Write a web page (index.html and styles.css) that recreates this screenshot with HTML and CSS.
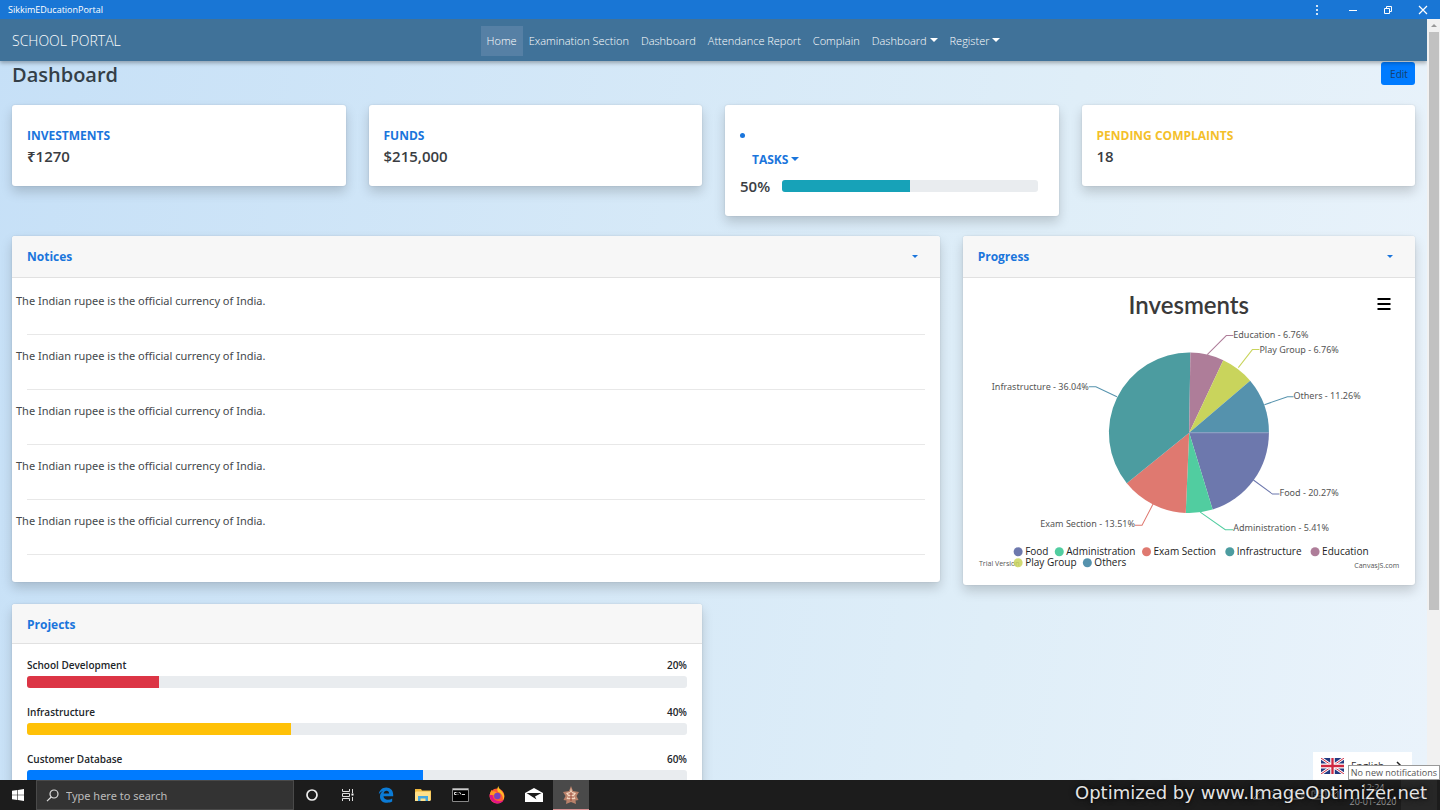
FILE: index.html
```html
<!DOCTYPE html>
<html lang="en">
<head>
<meta charset="utf-8">
<title>SikkimEDucationPortal</title>
<link rel="stylesheet" href="styles.css">
</head>
<body>
<header class="titlebar">
  <span class="titlebar-name">SikkimEDucationPortal</span>
  <div class="window-controls">
    <button aria-label="Menu"><svg width="12" height="12" viewBox="0 0 12 12" fill="#fff"><circle cx="5" cy="2" r="1.100"/><circle cx="5" cy="6" r="1.100"/><circle cx="5" cy="10" r="1.100"/></svg></button>
    <button aria-label="Minimize"><svg width="12" height="12" viewBox="0 0 12 12" stroke="#fff"><path d="M2 6.500h8"/></svg></button>
    <button aria-label="Restore"><svg width="12" height="12" viewBox="0 0 12 12" fill="none" stroke="#fff"><path d="M2.500 4.500h5v5h-5zM4.500 4.500v-2h5v5h-2"/></svg></button>
    <button aria-label="Close"><svg width="12" height="12" viewBox="0 0 12 12" stroke="#fff" stroke-width="1.200"><path d="M2 2l8 8M10 2l-8 8"/></svg></button>
  </div>
</header>

<div class="viewport">
  <div class="page">
    <nav class="navbar">
      <a class="brand" href="#">SCHOOL PORTAL</a>
      <div class="nav-links">
        <a class="active" href="#">Home</a>
        <a href="#">Examination Section</a>
        <a href="#">Dashboard</a>
        <a href="#">Attendance Report</a>
        <a href="#">Complain</a>
        <a class="caret" href="#">Dashboard</a>
        <a class="caret" href="#">Register</a>
      </div>
    </nav>

    <main class="content">
      <div class="heading">
        <h1>Dashboard</h1>
        <button class="edit">Edit</button>
      </div>

      <div class="grid">
        <section class="card stat">
          <h2>INVESTMENTS</h2>
          <p>₹1270</p>
        </section>
        <section class="card stat">
          <h2>FUNDS</h2>
          <p>$215,000</p>
        </section>
        <section class="card stat">
          <span class="bullet"></span>
          <h2><a class="caret tasks" href="#">TASKS</a></h2>
          <div class="task-progress">
            <p>50%</p>
            <div class="bar"><div class="fill teal" style="width:50%"></div></div>
          </div>
        </section>
        <section class="card stat warning">
          <h2>PENDING COMPLAINTS</h2>
          <p>18</p>
        </section>

        <section class="card notices">
          <header class="card-header"><h2>Notices</h2><button class="caret" aria-label="Notice options"></button></header>
          <div class="notice-list">
            <p>The Indian rupee is the official currency of India.</p><hr>
            <p>The Indian rupee is the official currency of India.</p><hr>
            <p>The Indian rupee is the official currency of India.</p><hr>
            <p>The Indian rupee is the official currency of India.</p><hr>
            <p>The Indian rupee is the official currency of India.</p><hr>
          </div>
        </section>

        <section class="card progress-card">
          <header class="card-header"><h2>Progress</h2><button class="caret" aria-label="Progress options"></button></header>
          <div class="chart">
            <h3>Invesments</h3>
            <svg viewBox="0 30 421 250" role="img" aria-label="Invesments by department">
              <g transform="translate(210.5 140.5)">
                <path fill="#6d78ad" d="M0 0H79.500A80 80 0 0 1 23.400 76.500Z"/>
                <path fill="#51cda0" d="M0 0L23.400 76.500A80 80 0 0 1 -3.400 79.900Z"/>
                <path fill="#df7970" d="M0 0L-3.400 79.900A80 80 0 0 1 -62.200 50.300Z"/>
                <path fill="#4c9ca0" d="M0 0L-62.200 50.300A80 80 0 0 1 1.200 -80Z"/>
                <path fill="#ae7d99" d="M0 0L1.200 -80A80 80 0 0 1 34 -72.400Z"/>
                <path fill="#c9d45c" d="M0 0L34 -72.400A80 80 0 0 1 60.800 -52Z"/>
                <path fill="#5592ad" d="M0 0L60.800 -52A80 80 0 0 1 79.500 0Z"/>
                <path stroke="#8f9fc4" d="M0 0H79.500"/>
                <g fill="none" stroke-width="1">
                  <path stroke="#6d78ad" d="M64 47L83 61H90"/>
                  <path stroke="#51cda0" d="M11 79L36 96.500H44"/>
                  <path stroke="#df7970" d="M-36 71L-47 92H-54"/>
                  <path stroke="#5592ad" d="M-72 -36L-93 -46H-100"/>
                  <path stroke="#ae7d99" d="M18 -78L37 -97H44"/>
                  <path stroke="#c9d45c" d="M49 -65L63 -83H70"/>
                  <path stroke="#5592ad" d="M75 -28L98 -36H104"/>
                </g>
                <g class="slice-labels">
                  <text x="44" y="-95">Education - 6.76%</text>
                  <text x="70" y="-80">Play Group - 6.76%</text>
                  <text x="104" y="-34">Others - 11.26%</text>
                  <text x="90" y="63">Food - 20.27%</text>
                  <text x="44" y="98">Administration - 5.41%</text>
                  <text x="-54" y="94" text-anchor="end">Exam Section - 13.51%</text>
                  <text x="-100" y="-43" text-anchor="end">Infrastructure - 36.04%</text>
                </g>
              </g>
              <text class="credit" x="1" y="273">Trial Version</text>
              <text class="credit" x="420" y="275" text-anchor="end">CanvasJS.com</text>
              <g class="legend">
                <circle cx="40" cy="259" r="4.500" fill="#6d78ad"/><text x="47" y="262">Food</text>
                <circle cx="81" cy="259" r="4.500" fill="#51cda0"/><text x="88" y="262">Administration</text>
                <circle cx="168" cy="259" r="4.500" fill="#df7970"/><text x="175" y="262">Exam Section</text>
                <circle cx="251" cy="259" r="4.500" fill="#4c9ca0"/><text x="258" y="262">Infrastructure</text>
                <circle cx="336" cy="259" r="4.500" fill="#ae7d99"/><text x="343" y="262">Education</text>
                <circle cx="40" cy="270" r="4.500" fill="#c9d45c" fill-opacity=".85"/><text x="47" y="273">Play Group</text>
                <circle cx="109" cy="270" r="4.500" fill="#5592ad"/><text x="116" y="273">Others</text>
              </g>
            </svg>
            <button class="chart-menu" aria-label="Chart menu"><svg width="14" height="12" viewBox="0 0 14 12" stroke="#000" stroke-width="2"><path d="M0.500 1h13M0.500 6h13M0.500 11h13"/></svg></button>
          </div>
        </section>

        <section class="card projects">
          <header class="card-header"><h2>Projects</h2></header>
          <div class="project-list">
            <div class="project-label"><span>School Development</span><span>20%</span></div>
            <div class="bar"><div class="fill red" style="width:20%"></div></div>
            <div class="project-label"><span>Infrastructure</span><span>40%</span></div>
            <div class="bar"><div class="fill yellow" style="width:40%"></div></div>
            <div class="project-label"><span>Customer Database</span><span>60%</span></div>
            <div class="bar"><div class="fill blue" style="width:60%"></div></div>
          </div>
        </section>
      </div>
    </main>
    <button class="language">
      <svg width="23" height="16" viewBox="0 0 60 40" preserveAspectRatio="none"><path fill="#233a80" d="M0 0h60v40H0z"/><path stroke="#fff" stroke-width="7" d="M0 0l60 40M60 0L0 40"/><path stroke="#cf2840" stroke-width="2.500" d="M0 0l60 40M60 0L0 40"/><path stroke="#fff" stroke-width="12" d="M30 0v40M0 20h60"/><path stroke="#cf2840" stroke-width="6" d="M30 0v40M0 20h60"/></svg>
      <span>English</span>
      <svg width="8" height="10" viewBox="0 0 8 10" fill="none" stroke="#222" stroke-width="1.500"><path d="M2 1l4 4-4 4"/></svg>
    </button>
  </div>
  <div class="scrollbar"><span class="scroll-up"></span><span class="thumb"></span></div>
</div>

<footer class="taskbar">
  <button class="task" aria-label="Start"><svg width="12" height="12" viewBox="0 0 12 12" fill="#fff"><path d="M0 1.700L5.400 1v4.700H0zM6 .9L12 0v5.700H6zM0 6.300h5.400V11L0 10.300zM6 6.300h6V12l-6-.9z"/></svg></button>
  <label class="search">
    <svg width="13" height="13" viewBox="0 0 13 13" fill="none" stroke="#ddd" stroke-width="1.200"><circle cx="8" cy="5" r="4"/><path d="M5.200 8L1 12.200"/></svg>
    <input type="text" placeholder="Type here to search" aria-label="Search">
  </label>
  <button class="task" aria-label="Cortana"><svg width="14" height="14" viewBox="0 0 14 14"><circle cx="7" cy="7" r="5" fill="none" stroke="#eee" stroke-width="1.700"/></svg></button>
  <button class="task" aria-label="Task view"><svg width="14" height="14" viewBox="0 0 14 14" fill="none" stroke="#ddd"><path d="M1.500 1v2.500h7V1M1.500 13v-2.500h7V13M1.500 5.500h7v3h-7zM11.500 1v4M11.500 9v4"/><path stroke="#fff" stroke-width="2" d="M11.500 5.500v2"/></svg></button>
  <div class="apps">
  <button class="task" aria-label="Edge"><svg width="16" height="16" viewBox="0 0 16 16"><path fill="#0b7bd6" d="M.8 7.300C1.300 3.300 4.100.5 8.200.5c4.300 0 7 2.900 7 7.300v1.400H5.500c.1 2.300 2 3.500 4.400 3.500 1.600 0 3-.4 4.300-1.200v3.100c-1.400.8-3 1.200-4.900 1.200-4.600 0-7.300-2.500-7.300-6.400 0-2.400 1.100-4.300 3.200-5.500C3.300 4.500 1.700 5.700.8 7.300zM5.600 6.500h5.500c0-1.700-1-2.700-2.600-2.700S5.900 4.800 5.600 6.500z"/></svg></button>
  <button class="task" aria-label="File Explorer"><svg width="16" height="14" viewBox="0 0 16 14"><path fill="#f0b83c" d="M0 1h6l1 1.500h9V12H0z"/><path fill="#ffe08a" d="M1 3.500h14.500V13H0V4.500z"/><path fill="#45a7e0" d="M3 13V8h10v5h-2.500v-2.500h-5V13z"/></svg></button>
  <button class="task" aria-label="Command Prompt"><svg width="17" height="14" viewBox="0 0 17 14"><path fill="#000" stroke="#888" d="M.5.500h16v13H.5z"/><path stroke="#ccc" stroke-width="1.500" d="M1 1.500h15"/><path fill="none" stroke="#ddd" d="M4.500 4.500h-2v2h2M6 4.500v.6M6 6v.6M7.500 4l1.500 2.500M10 6.500h3"/></svg></button>
  <button class="task" aria-label="Firefox"><svg width="18" height="18" viewBox="0 0 18 18"><circle cx="9" cy="10" r="7.500" fill="#ff5a36"/><path fill="#ffbf25" d="M10.500 0c0 2.200 1.500 3.300 2.500 4.400 3.700 3.700 4 7.200 1.700 10.200C16 9 12 6.500 10 6 8.700 4.200 9.200 2 10.500 0z"/><path fill="#e31587" d="M1.600 8c-.5 6 4 9.500 8.200 9.400 2.800 0 4.800-1.300 6-3.200-5 2.500-11 .3-11-4.600C3.600 9 2.500 8 1.600 8z"/><path fill="#ff9a22" d="M2 9c0-2.500 1-4.300 1.800-5.300l.5 1.900C6 4.600 8 5.500 8.800 7L6 9z"/><circle cx="9.300" cy="10" r="3.200" fill="#7544c2"/></svg></button>
  <button class="task" aria-label="Mail"><svg width="18" height="14" viewBox="0 0 18 14"><path fill="#fff" d="M0 5l9-5 9 5v9H0z"/><path fill="#1c1c1c" d="M1.500 5h15L10 8.500l1.500 3z"/></svg></button>
  <button class="task running" aria-label="SikkimEDucationPortal"><svg width="18" height="18" viewBox="0 0 18 18"><path fill="#b9816a" d="M9 0l2 5 6 1-2.500 4 2 4-3 .5L14 18l-5-2-5 2 .5-3.500-3-.5 2-4L1 6l6-1z"/><path fill="#f3d6c0" d="M9 2l1 4 4 1-2 3 1.500 3-3 .3L9 12.500 7.500 13.300l-3-.3L6 10 4 7l4-1z"/><path fill="none" stroke="#9b4a38" d="M6.500 8h5M6 11h6M9 6v9"/></svg></button>
  </div>
  <div class="tray">
    <svg width="110" height="12" viewBox="0 0 110 12" fill="none" stroke="#888"><path d="M1 8l3-3 3 3M18 10l9-9v9zM36 2l5 3-5 5M55 3h12v7H55zM69 5v3M77 2h14v8H77zM79 4h10M79 7h10M97 5h3l3-3v8l-3-3h-3z"/></svg>
    <div class="clock"><span>12:24</span><span>20-01-2020</span></div>
    <button class="notifications" aria-label="Notifications"><svg width="12" height="12" viewBox="0 0 12 12" fill="none" stroke="#888"><path d="M1 1h10v7H7l-2 2V8H1z"/></svg></button>
  </div>
</footer>
<div class="tooltip" role="tooltip">No new notifications</div>
<div class="watermark">Optimized by www.ImageOptimizer.net</div>
</body>
</html>
```
FILE: styles.css
```css
* { box-sizing: border-box; }
body { margin: 0; height: 100vh; display: flex; flex-direction: column; overflow: hidden; position: relative; font-family: "Open Sans", "Noto Sans", sans-serif; font-size: 12px; line-height: 18px; color: #212529; }
h1, h2, h3, p { margin: 0; }
a { color: inherit; text-decoration: none; }
button { font: inherit; color: inherit; border: 0; padding: 0; background: none; }

.titlebar { flex: none; height: 19px; display: flex; align-items: center; justify-content: space-between; background: #1976d5; color: #fff; padding-left: 8px; font-size: 9px; }
.window-controls { display: flex; }
.window-controls button { width: 35px; height: 18px; display: flex; align-items: center; justify-content: center; }

.viewport { flex: 1; min-height: 0; display: flex; }
.page { flex: 1; min-width: 0; overflow: hidden; position: relative; background: linear-gradient(100deg, #c6e0f7 0%, #dfeef8 70%, #eaf3fb 100%); }
.scrollbar { width: 13px; background: #f1f1f1; display: flex; flex-direction: column; align-items: center; padding-left: 1px; }
.scroll-up { height: 13px; display: flex; align-items: center; }
.scroll-up::before { content: ""; border: 3px solid transparent; border-top: 0; border-bottom: 3px solid #999; }
.thumb { width: 10px; height: 76%; background: #c1c1c1; }

.navbar { height: 42px; display: flex; align-items: center; justify-content: center; position: relative; padding-top: 2px; background: #407299; color: #fff; box-shadow: 0 2px 4px rgba(0, 0, 0, .3); font-size: 11px; font-weight: 300; }
.brand { position: absolute; left: 12px; font-size: 14px; }
.nav-links { display: flex; padding-left: 60px; }
.nav-links a { padding: 6px; }
.nav-links .active { background: #5680a5; }
.caret::after { content: ""; display: inline-block; margin-left: 3px; vertical-align: 3px; border: 4px solid transparent; border-bottom: 0; border-top-color: currentColor; }

.content { padding: 0 12px; }
.heading { display: flex; justify-content: space-between; align-items: flex-start; height: 44px; padding-top: 1px; }
h1 { font-size: 20px; line-height: 26px; font-weight: 600; color: #343f47; }
.edit { width: 34px; height: 23px; border-radius: 3px; background: #007bff; color: #17406e; font-size: 10px; padding-left: 2px; }

.grid { display: grid; grid-template-columns: repeat(12, minmax(0, 1fr)); column-gap: 23px; align-items: start; }
.card { background: #fff; border-radius: 3px; box-shadow: 0 6px 12px rgba(0, 0, 0, .17), 0 0 2px rgba(0, 0, 0, .12); overflow: hidden; }
.stat { grid-column: span 3; padding: 22px 15px 19px; margin-bottom: 20px; }
.card h2 { font-size: 12px; line-height: 18px; font-weight: 700; color: #1a75dc; }
.stat p { font-size: 15px; line-height: 22px; font-weight: 600; color: #3a3d42; }
.stat.warning h2 { color: #f4bf2a; }
.bullet { display: block; width: 5px; height: 5px; margin: 6px 0 13px; border-radius: 50%; background: #1a75dc; }
.tasks { margin-left: 12px; }
.task-progress { display: flex; align-items: center; gap: 12px; padding: 6px 6px 0 0; }
.task-progress .bar { flex: 1; }
.bar { height: 12px; border-radius: 3px; background: #e9ecef; overflow: hidden; }
.fill { height: 100%; }
.teal { background: #17a2b8; }
.red { background: #dc3545; }
.yellow { background: #ffc107; }
.blue { background: #007bff; }

.card-header { display: flex; justify-content: space-between; align-items: center; padding: 12px 22px 11px 15px; background: #f7f7f7; border-bottom: 1px solid #e1e1e1; }
.card-header .caret { color: #1a75dc; }
.card-header .caret::after { border-width: 3px; border-bottom: 0; }
.notices { grid-column: span 8; }
.notice-list { padding: 2px 15px 27px 4px; color: #44484c; font-family: "Noto Sans", sans-serif; font-size: 11px; }
.notice-list p { padding: 12px 0 24px; }
.notice-list hr { margin: 0 0 0 11px; border: 0; border-top: 1px solid #e8e8e8; }

.progress-card { grid-column: span 4; }
.chart { position: relative; padding: 12px 15px; }
.chart h3 { font-family: Lato, sans-serif; font-size: 24px; line-height: 30px; font-weight: 600; color: #3a3a3a; text-align: center; margin-bottom: 2px; }
.chart > svg { display: block; width: 100%; }
.chart-menu { position: absolute; top: 19px; right: 24px; height: 14px; display: flex; align-items: center; }
.slice-labels { font-family: "Noto Sans", sans-serif; font-size: 9px; fill: #555; }
.legend { font-size: 10px; font-weight: 500; fill: #222; }
.credit { font-size: 7px; fill: #555; }

.projects { grid-column: span 6; margin-top: 19px; }
.projects .card-header { padding-block: 12px 9px; }
.project-list { padding: 13px 15px; }
.project-label { display: flex; justify-content: space-between; font-size: 10px; font-weight: 600; line-height: 16px; margin-bottom: 3px; }
.project-list .bar { margin-bottom: 16px; }

.language { position: absolute; right: 15px; bottom: 0; width: 99px; height: 28px; display: flex; align-items: center; padding: 0 9px 0 8px; background: #fff; color: #333; font-size: 10px; }
.language span { flex: 1; text-align: left; padding-left: 7px; }
.tooltip { position: absolute; right: 0; bottom: 30px; height: 15px; padding: 0 2px; border: 1px solid #999; background: #fff; color: #555; font-size: 9px; line-height: 13px; }

.taskbar { flex: none; height: 30px; display: flex; background: #1c1c1c; color: #ccc; }
.task { width: 36px; display: flex; align-items: center; justify-content: center; }
.apps { display: flex; gap: 1px; margin-left: 2px; }
.running { background: #4a4a4a; border-bottom: 1px solid #d98f92; }
.search { width: 258px; display: flex; align-items: center; gap: 7px; padding: 0 9px; background: #333; border: 1px solid #4a4a4a; }
.search input { flex: 1; min-width: 0; border: 0; padding: 0; background: none; font-family: "Noto Sans", sans-serif; font-size: 11px; color: #ccc; }
.search input::placeholder { color: #bbb; opacity: 1; }
.tray { margin-left: auto; display: flex; align-items: center; padding-right: 3px; }
.clock { width: 56px; display: flex; flex-direction: column; align-items: center; font-size: 9px; line-height: 14px; color: #999; }
.notifications { width: 36px; height: 30px; display: flex; align-items: center; justify-content: center; background: #272727; }
.watermark { position: absolute; right: 13px; bottom: 5px; font-family: "DejaVu Sans", sans-serif; font-size: 18px; line-height: 24px; color: #e4e4e4; text-shadow: 0 0 3px #000, 0 0 6px #111; }
```
